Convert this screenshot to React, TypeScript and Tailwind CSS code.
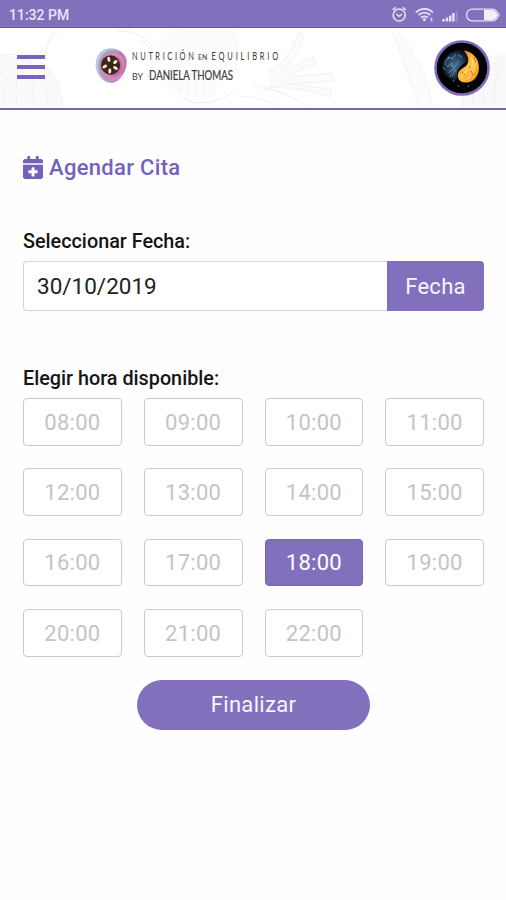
import React, { useState } from 'react';
import { FaCalendarPlus } from 'react-icons/fa';

const hours = [
  '08:00', '09:00', '10:00', '11:00',
  '12:00', '13:00', '14:00', '15:00',
  '16:00', '17:00', '18:00', '19:00',
  '20:00', '21:00', '22:00'
];

const StatusBar: React.FC = () => (
  <div className="flex h-7 items-center justify-between border-b border-[#6650b4] bg-[#8270bd] pl-[9px] pr-[6px]">
    <span className="pt-[2px] text-[14px] font-medium leading-none text-[#e9e3f8]">11:32 PM</span>
    <svg width="110" height="20" viewBox="390 5 110 20" fill="none" stroke="#e6dff7" className="mt-[2px]">
      {/* Alarm */}
      <circle cx="399.2" cy="15" r="6" strokeWidth="1.6" />
      <path d="M392.7 9.8l3-2.4M405.7 9.8l-3-2.4M396.300 14l2.900 2.300 2.900-2.300" strokeWidth="1.5" />
      {/* Wifi */}
      <path d="M415.8 12.3q8.600-7 17.200 0M418.400 15q6-4.700 12 0M421 17.700q3.400-2.500 6.800 0" strokeWidth="1.8" />
      <circle cx="424.4" cy="19.6" r="1.6" fill="#e6dff7" stroke="none" />
      <path d="M431.500 17.500v4" strokeWidth="1.800" opacity=".8" />
      {/* Signal */}
      <path d="M443.5 19v2.500M447 17.500v4M450.200 15.500v6M453.400 13v8.500" strokeWidth="2.4" />
      <path d="M456.6 11v10.500" strokeWidth="1.6" opacity=".3" />
      {/* Battery */}
      <rect x="466.7" y="9.2" width="31" height="11.6" rx="5.2" strokeWidth="1.3" />
      <path d="M484 10h8a4.500 4.500 0 0 1 0 10h-8z" fill="#f2eefb" stroke="none" />
      <path d="M499 13v4" strokeWidth="1" />
    </svg>
  </div>
);

// Faint vegetable sketches behind the header
const HeaderBackdrop: React.FC = () => (
  <svg className="absolute inset-0" width="506" height="79" viewBox="0 28 506 79" fill="none" stroke="#f2f2f2" strokeWidth="1">
    <path d="M0 55q26-3 41 7 20 14 22 45H0z" fill="#fafafa" stroke="none" />
    <path d="M0 55q26-3 41 7 20 14 22 45M6 107q-9-28 19-48M18 107q-8-30 14-45M34 107q-4-27 0-42M48 107q0-27-11-43M58 100q-5-22-15-33" />
    <path d="M34 57q13-8 19-25M46 64q-5-17 12-32" />
    <path d="M117 31q30-1 41 26 14 46 42 46 24-1 34-13M139 40q15 6 19 25" stroke="#eeeeee" />
    <path d="M152 55q5-27 31-27h50q12 22-3 45-17 31-37 27-28-2-41-45z" fill="#fcfcfc" stroke="none" />
    <path d="M180 85v9M188 82v14M196 83v12M204 82v12M212 84v8M233 33q12 22-3 45" strokeDasharray="5 2" />
    <path d="M268 72q22-10 31-40l5 2q-5 23-22 38l31-15 3 7-31 13 47-4 3 8-48 3 44 5v8q-26-9-62-10" fill="#fbfbfb" />
    <path d="M253 85q17 2 42 14M262 88q28 4 44 18M242 96q24 2 37 11" />
    <path d="M392 31q12 29 27 76h14q-9-46-35-74" fill="#fcfcfc" />
    <path d="M463 107q-5-42 25-51h18v51z" fill="#f9f9f9" stroke="none" />
    <path d="M463 107q-5-42 25-51h18M473 107q-4-37 19-49M484 107q-4-32 14-48M495 107q-2-30 8-44" />
  </svg>
);

const Logo: React.FC = () => (
  <svg width="186" height="42" viewBox="94 45 186 42" className="relative font-[Lato,sans-serif]">
    <defs>
      <radialGradient id="fig" cx=".57" cy=".52" r=".52">
        <stop offset=".4" stopColor="#b3609a" />
        <stop offset=".65" stopColor="#d58bbd" />
        <stop offset=".86" stopColor="#b98fbb" />
        <stop offset="1" stopColor="#b4cfdb" />
      </radialGradient>
    </defs>
    <path d="M110 48.300c7 0 12 2.500 15.500 8 2 4 1.600 10-.7 15-2.800 6.500-8 11.700-13 11.700-8 0-13-6-15.300-12-1.500-6-1-12 2-16.500 2.700-4 7-6.200 11.500-6.200z" fill="url(#fig)" />
    <path d="M119 52c7 6 8 14 3 22" fill="none" stroke="#cf4b91" strokeWidth="2" opacity=".45" />
    <ellipse cx="110.500" cy="65" rx="9.600" ry="9.700" fill="#40251a" />
    <g fill="#fbf1df">
      <ellipse cx="108.800" cy="59.200" rx="1.500" ry="2.500" transform="rotate(-12 108.800 59.200)" />
      <ellipse cx="115.300" cy="62" rx="1.500" ry="2.500" transform="rotate(50 115.300 62)" />
      <ellipse cx="115.500" cy="68" rx="1.500" ry="2.500" transform="rotate(-60 115.500 68)" />
      <ellipse cx="109.800" cy="71" rx="1.500" ry="2.500" transform="rotate(5 109.800 71)" />
      <ellipse cx="104.800" cy="66.500" rx="1.500" ry="2.500" transform="rotate(60 104.800 66.500)" />
    </g>
    <g fill="#3c3c3c">
      <g transform="translate(132 59.800) scale(.68 1)" fontSize="11">
        <text textLength="91" lengthAdjust="spacing">NUTRICIÓN</text>
        <text x="97" textLength="14" lengthAdjust="spacingAndGlyphs" fontSize="8">EN</text>
        <text x="117" textLength="98" lengthAdjust="spacing">EQUILIBRIO</text>
      </g>
      <text x="132" y="79.800" textLength="11" lengthAdjust="spacingAndGlyphs" fontSize="9">BY</text>
      <text x="149" y="79.800" textLength="84" lengthAdjust="spacingAndGlyphs" fontSize="12.500" stroke="#3c3c3c" strokeWidth=".2">DANIELA THOMAS</text>
    </g>
  </svg>
);

const Avatar: React.FC = () => (
  <svg width="56" height="56" viewBox="0 0 56 56" className="relative">
    <defs>
      <linearGradient id="fire" x1="0" y1="0" x2="1" y2="1">
        <stop offset="0" stopColor="#e96b08" />
        <stop offset=".5" stopColor="#ffc443" />
        <stop offset="1" stopColor="#f08a0c" />
      </linearGradient>
      <radialGradient id="water">
        <stop offset="0" stopColor="#41688c" />
        <stop offset=".6" stopColor="#28435f" />
        <stop offset="1" stopColor="#0a111c" />
      </radialGradient>
    </defs>
    <circle cx="28" cy="28" r="26.500" fill="#030303" stroke="#7f6bbd" strokeWidth="2.600" />
    <path d="M29 10c6 1 8 7 3 12-6 4-10 8-9 15-2 6-4 4-6 3-5-4-9-8-9-13C9 15 20 9 29 10z" fill="url(#water)" />
    <path d="M11 22l4-5 3 2 4-5M13 27l5-4 2 5 5-7M15 33l5-5 2 4M18 36l3-7M9 27l2 3M24 15l4 2" fill="none" stroke="#7297b8" strokeWidth="1.100" opacity=".65" />
    <path d="M14 18h1M11 24h1M17 26h1M16 36h1M24 46h1M34 46h1M19 41h1" stroke="#a8c5dc" strokeWidth="1" />
    <path d="M30 10.500c9 1 15 9 15 17 0 9-6 15-13 15-7 0-9-5-8-9 2-6 8-5 10-11 1-5-1-8-4-12z" fill="url(#fire)" />
    <path d="M37 17c3 5 2 9-1 13M41 21c1 7-2 12-6 14M28 38c-1-4 3-5 6-8M33 39l5-3M39 28l2 3" fill="none" stroke="#fff0a0" strokeWidth="1.300" opacity=".65" />
    <path d="M40 17l2 6M37 31l2 4M28 32l3 3M35 26l2 2" stroke="#c94f06" strokeWidth="1" opacity=".7" />
  </svg>
);

const Header: React.FC = () => (
  <header className="relative flex h-[81.5px] items-center border-b-2 border-[#7662ba] bg-white pl-[17px] pr-[16px]">
    <HeaderBackdrop />
    <button className="relative mb-px flex w-[28px] flex-col gap-[6px]" aria-label="Menú">
      <span className="h-1 w-full bg-[#7865bb]" />
      <span className="h-1 w-full bg-[#7865bb]" />
      <span className="h-1 w-full bg-[#7865bb]" />
    </button>
    <div className="ml-[49px] flex-1 pb-[3px]">
      <Logo />
    </div>
    <Avatar />
  </header>
);

export default function App() {
  const [selected, setSelected] = useState('18:00');

  return (
    <div className="h-[900px] w-[506px] overflow-hidden bg-[#fefefe] font-[Roboto,sans-serif]">
      <StatusBar />
      <Header />

      <main className="flex flex-col pl-[23px] pr-[22px] pt-[44px]">
        <h1 className="flex h-7 items-center whitespace-nowrap text-[22px] font-medium tracking-[0.31px] text-[#7561bb]">
          <FaCalendarPlus className="mr-[6px] h-[23px] w-5" />
          Agendar Cita
        </h1>

        <label className="mt-[47.5px] h-6 text-[19.8px] font-medium leading-[25px] text-[#151515]">Seleccionar Fecha:</label>
        <div className="mt-2 flex h-[50px]">
          <div className="flex flex-1 items-center rounded-l-[4px] border border-r-0 border-[#d6d6d6] bg-white pl-[13px] pt-[2px] text-[22.5px] text-[#222]">
            30/10/2019
          </div>
          <button className="w-[97px] rounded-r-[4px] bg-[#8270bd] text-[22px] tracking-[0.3px] text-[#f8f5ff]">Fecha</button>
        </div>

        <label className="mt-[55px] h-6 text-[19.8px] font-medium leading-[25px] text-[#151515]">Elegir hora disponible:</label>
        <div className="mt-2 grid grid-cols-4 gap-x-[22px] gap-y-[22.5px]">
          {hours.map((hour) => (
            <button
              key={hour}
              onClick={() => setSelected(hour)}
              className={`h-[47.8px] rounded-[4px] border pt-px text-[22px] tracking-[0.3px] ${
                hour === selected
                  ? 'border-[#7965ba] bg-[#8270bd] text-white'
                  : 'border-[#cbcbcb] bg-white text-[#c4c4c4]'
              }`}
            >
              {hour}
            </button>
          ))}
        </div>

        <button className="ml-[114px] mt-[23px] h-[50px] w-[233px] rounded-full bg-[#8270bd] text-[22px] tracking-[0.3px] text-[#f8f5ff]">
          Finalizar
        </button>
      </main>
    </div>
  );
}
